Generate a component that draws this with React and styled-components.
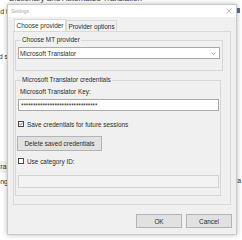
import React from "react";
import styled, { createGlobalStyle } from "styled-components";

const GlobalStyle = createGlobalStyle`
  html, body { margin: 0; padding: 0; background: #ffffff; }
  body {
    width: 242px;
    height: 240px;
    overflow: hidden;
    font-family: "Liberation Sans", Arial, sans-serif;
    color: #2b2b2b;
  }
  * { box-sizing: border-box; }
`;

const Page = styled.div`
  position: relative;
  width: 242px;
  height: 240px;
  overflow: hidden;
  background: #ffffff;
`;

/* ---------- background document (partly hidden by the dialog) ---------- */
const Backdrop = styled.div`
  display: flex;
  flex-direction: column;
  height: 100%;
`;

const DocTitle = styled.div`
  margin-top: -6px;
  padding-left: 9px;
  font-size: 8px;
  line-height: 9px;
  color: #333;
  white-space: nowrap;
`;

const DocColumns = styled.div`
  flex: 1;
  display: grid;
  grid-template-columns: 8px 1fr 6px;
`;

const Margin = styled.div`
  display: flex;
  flex-direction: column;
  overflow: hidden;
  font-size: 7px;
  line-height: 8px;
  color: #333;
  white-space: nowrap;
  align-items: ${(p) => (p.$side === "left" ? "flex-end" : "flex-start")};
`;

const Snippet = styled.div`
  margin-top: ${(p) => p.$top}px;
  padding: ${(p) => (p.$boxed ? "2px 0" : "0")};
  background: ${(p) => (p.$boxed ? "#f2f2f2" : "transparent")};
  color: ${(p) => p.$color || "#333"};
`;

const Marker = styled.div`
  margin-top: ${(p) => p.$top}px;
  width: ${(p) => p.$w}px;
  height: ${(p) => p.$h}px;
  background: ${(p) => p.$color};
`;

/* ---------- dialog ---------- */
const Dialog = styled.div`
  position: absolute;
  left: 7px;
  top: 4px;
  width: 230px;
  height: 231px;
  display: flex;
  flex-direction: column;
  border: 1px solid #c9c9c9;
  background: #f0f0f0;
  box-shadow: 0 0 5px rgba(0, 0, 0, 0.28);
`;

const TitleBar = styled.div`
  height: 12px;
  flex: none;
  display: flex;
  align-items: center;
  justify-content: space-between;
  padding: 0 4px 0 3px;
  background: #ffffff;
`;

const Title = styled.span`
  font-size: 5px;
  color: #a8a8a8;
`;

const CloseIcon = () => (
  <svg width="6" height="6" viewBox="0 0 6 6">
    <path d="M0.5 0.5 L5.5 5.5 M5.5 0.5 L0.5 5.5" stroke="#a9a9a9" strokeWidth="0.8" />
  </svg>
);

const Body = styled.div`
  flex: 1;
  display: flex;
  flex-direction: column;
  padding: 3px 5px 0 5px;
  font-size: 6.4px;
`;

const TabStrip = styled.div`
  display: flex;
  height: 11px;
  padding-left: 1px;
`;

const Tab = styled.div`
  width: ${(p) => p.$w}px;
  height: ${(p) => (p.$active ? 12 : 11)}px;
  margin-top: ${(p) => (p.$active ? -1 : 0)}px;
  display: flex;
  align-items: center;
  justify-content: center;
  border: 1px solid #d9d9d9;
  border-bottom: none;
  background: ${(p) => (p.$active ? "#ffffff" : "#f0f0f0")};
  color: #2b2b2b;
  white-space: nowrap;
  position: relative;
  z-index: ${(p) => (p.$active ? 1 : 0)};
`;

const Panel = styled.div`
  height: 174px;
  display: flex;
  flex-direction: column;
  padding: 4px 7px 0 1px;
  border: 1px solid #d9d9d9;
  background: #f0f0f0;
`;

const Group = styled.fieldset`
  margin: ${(p) => p.$mt || 0}px ${(p) => p.$mr || 0}px 0 0;
  padding: 0 1px ${(p) => p.$pb}px 2px;
  min-width: 0;
  border: 1px solid #d7d7d7;
  display: flex;
  flex-direction: column;
  align-items: stretch;
`;

const Caption = styled.legend`
  margin-left: 3px;
  padding: 0 1px;
  font-size: 6.4px;
  line-height: 8px;
  color: #2b2b2b;
`;

const Select = styled.div`
  margin-top: 3px;
  margin-right: 1px;
  height: 12px;
  display: flex;
  align-items: center;
  justify-content: space-between;
  padding: 0 3px 0 1px;
  border: 1px solid #a9a9a9;
  background: #ffffff;
  color: #2b2b2b;
`;

const Chevron = () => (
  <svg width="5" height="3" viewBox="0 0 5 3">
    <path d="M0.5 0.5 L2.5 2.5 L4.5 0.5" fill="none" stroke="#8a8a8a" strokeWidth="0.8" />
  </svg>
);

const FieldLabel = styled.div`
  margin-top: ${(p) => p.$mt}px;
  padding-left: 2px;
  line-height: 8px;
  color: #2b2b2b;
`;

const TextBox = styled.div`
  margin-top: ${(p) => p.$mt}px;
  height: ${(p) => p.$h}px;
  display: flex;
  align-items: center;
  padding: 0 2px;
  border: 1px solid ${(p) => (p.$disabled ? "#d3d3d3" : "#a9a9a9")};
  background: ${(p) => (p.$disabled ? "#f3f3f3" : "#ffffff")};
  color: #2b2b2b;
  letter-spacing: -0.1px;
  overflow: hidden;
  white-space: nowrap;
`;

const CheckRow = styled.label`
  margin-top: ${(p) => p.$mt}px;
  height: 8px;
  display: flex;
  align-items: center;
  gap: 3px;
  color: #2b2b2b;
  white-space: nowrap;
`;

const Box = styled.span`
  width: 6px;
  height: 6px;
  flex: none;
  display: flex;
  align-items: center;
  justify-content: center;
  border: 1px solid #4a4a4a;
  background: #ffffff;
`;

const Tick = () => (
  <svg width="4" height="4" viewBox="0 0 4 4">
    <path d="M0.4 2 L1.5 3.1 L3.6 0.8" fill="none" stroke="#333" strokeWidth="0.7" />
  </svg>
);

const Button = styled.div`
  margin-top: ${(p) => p.$mt || 0}px;
  margin-left: ${(p) => p.$ml || 0}px;
  width: ${(p) => p.$w}px;
  height: ${(p) => p.$h}px;
  display: flex;
  align-items: center;
  justify-content: center;
  border: 1px solid #b4b4b4;
  background: #e1e1e1;
  color: #2b2b2b;
  white-space: nowrap;
`;

const ButtonRow = styled.div`
  margin-top: 9px;
  display: flex;
  justify-content: flex-end;
  gap: 4px;
  margin-right: -1px;
`;

export default function App() {
  return (
    <>
      <GlobalStyle />
      <Page>
        <Backdrop>
          <DocTitle>Dictionary and Automated Translation</DocTitle>
          <DocColumns>
            <Margin $side="left">
              <Snippet $top={5}>d t</Snippet>
              <Marker $top={18} $w={1} $h={5} $color="#5a9c5a" />
              <Snippet $top={14}>d s</Snippet>
              <Snippet $top={100} $boxed>rai</Snippet>
              <Snippet $top={5}>ng</Snippet>
            </Margin>
            <div />
            <Margin $side="right">
              <Marker $top={5} $w={4} $h={5} $color="#5b6f8f" />
              <Snippet $top={164}>'a</Snippet>
            </Margin>
          </DocColumns>
        </Backdrop>

        <Dialog>
          <TitleBar>
            <Title>Settings</Title>
            <CloseIcon />
          </TitleBar>
          <Body>
            <TabStrip>
              <Tab $w={52} $active>Choose provider</Tab>
              <Tab $w={51}>Provider options</Tab>
            </TabStrip>
            <Panel>
              <Group $pb={11}>
                <Caption>Choose MT provider</Caption>
                <Select>
                  <span>Microsoft Translator</span>
                  <Chevron />
                </Select>
              </Group>
              <Group $mt={5} $mr={2} $pb={7}>
                <Caption>Microsoft Translator credentials</Caption>
                <FieldLabel $mt={4}>Microsoft Translator Key:</FieldLabel>
                <TextBox $mt={3} $h={12}>
                  ********************************
                </TextBox>
                <CheckRow $mt={9}>
                  <Box>
                    <Tick />
                  </Box>
                  Save credentials for future sessions
                </CheckRow>
                <Button $mt={8} $ml={-1} $w={85} $h={15}>
                  Delete saved credentials
                </Button>
                <CheckRow $mt={6}>
                  <Box />
                  Use category ID:
                </CheckRow>
                <TextBox $mt={10} $h={13} $disabled />
              </Group>
            </Panel>
            <ButtonRow>
              <Button $w={46} $h={14}>OK</Button>
              <Button $w={46} $h={14}>Cancel</Button>
            </ButtonRow>
          </Body>
        </Dialog>
      </Page>
    </>
  );
}
